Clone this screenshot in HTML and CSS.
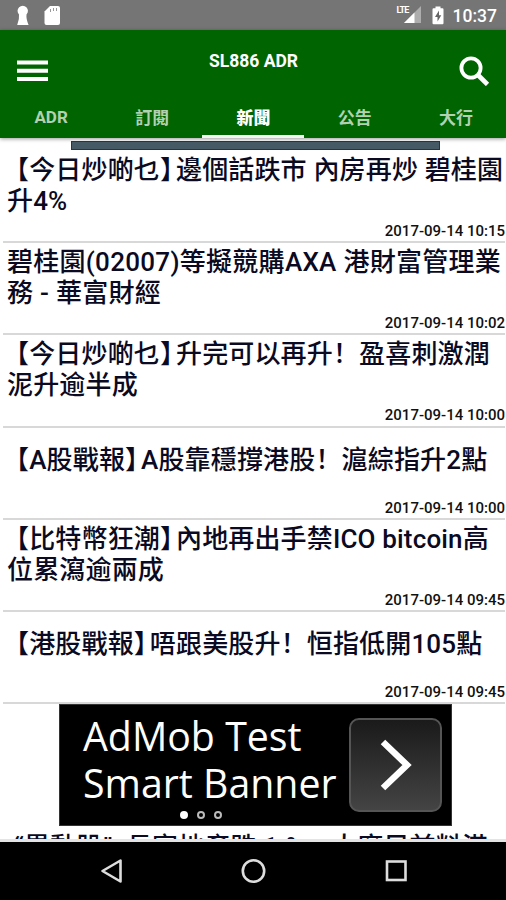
FILE: index.html
```html
<!DOCTYPE html>
<html lang="zh-CN">
<head>
    <meta charset="UTF-8">
    <meta name="viewport" content="width=device-width, initial-scale=1.0">
    <title>SL886 ADR</title>
    <link rel="stylesheet" href="styles.css">
</head>
<body>
    <div class="status-bar">
        <svg class="status-left" width="64" height="30" viewBox="0 0 64 30">
            <path fill="#fff" d="M17.2 25 Q19.600 19 19 14.500 A5.200 5.200 0 1 1 26.500 14.500 Q26 19 28.600 25 Z"/>
            <path fill="#fff" d="M50 6 H58 Q60 6 60 8 V23 Q60 25 58 25 H46.500 Q44.500 25 44.500 23 V11.500 Z"/>
            <path stroke="#999" stroke-width="1" d="M50.500 9 V12 M53.500 8 V11 M56.500 8 V11"/>
        </svg>
        <div class="status-right">
            <span class="lte">LTE</span>
            <svg class="signal" width="18" height="18" viewBox="0 0 18 18">
                <path fill="#adadad" d="M17 0 V17 H0 Z"/>
                <path fill="#fff" d="M10.500 6.500 V17 H0 Z"/>
            </svg>
            <svg width="12" height="19" viewBox="0 0 12 19">
                <path fill="#fff" d="M3.500 0.500 H8.500 V2.300 H10.500 Q11.500 2.300 11.500 3.500 V17 Q11.500 18.300 10.500 18.300 H1.500 Q0.500 18.300 0.500 17 V3.500 Q0.500 2.300 1.500 2.300 H3.500 Z"/>
                <path fill="#666" d="M7 4.500 L3 11 H5.500 V15.500 L9.300 9.300 H7 Z"/>
            </svg>
            <span class="clock">10:37</span>
        </div>
    </div>

    <header class="app-bar">
        <div class="toolbar">
            <svg width="31" height="22" viewBox="0 0 31 22">
                <path stroke="#fff" stroke-width="4" d="M0 2.500 H31 M0 10.700 H31 M0 18.900 H31"/>
            </svg>
            <h1 class="title">SL886 ADR</h1>
            <svg width="31" height="31" viewBox="0 0 31 31">
                <circle cx="12" cy="13" r="9.600" fill="none" stroke="#fff" stroke-width="3.800"/>
                <path stroke="#fff" stroke-width="4.600" d="M18.500 19.500 L28.500 29.500"/>
            </svg>
        </div>
        <nav class="tabs">
            <a class="tab">ADR</a>
            <a class="tab">訂閱</a>
            <a class="tab active">新聞</a>
            <a class="tab">公告</a>
            <a class="tab">大行</a>
        </nav>
    </header>

    <main class="content">
        <div class="top-banner"></div>
        <ul class="news">
            <li class="item">
                <p class="headline tagged"><span>【今日炒啲乜<span class="close">】</span>邊個話跌市 內房再炒 碧桂園<br><span class="second">升4%</span></span></p>
                <time>2017-09-14 10:15</time>
            </li>
            <li class="item">
                <p class="headline wide"><span>碧桂園(02007)等擬競購AXA 港財富管理業<br>務 - 華富財經</span></p>
                <time>2017-09-14 10:02</time>
            </li>
            <li class="item">
                <p class="headline tagged"><span>【今日炒啲乜<span class="close">】</span>升完可以再升！盈喜刺激潤<br><span class="second">泥升逾半成</span></span></p>
                <time>2017-09-14 10:00</time>
            </li>
            <li class="item single">
                <p class="headline tagged"><span>【A股戰報<span class="close">】</span>A股靠穩撐港股！滬綜指升2點</span></p>
                <time>2017-09-14 10:00</time>
            </li>
            <li class="item">
                <p class="headline tagged"><span>【比特幣狂潮<span class="close">】</span>內地再出手禁ICO bitcoin高<br><span class="second">位累瀉逾兩成</span></span></p>
                <time>2017-09-14 09:45</time>
            </li>
            <li class="item single">
                <p class="headline tagged"><span>【港股戰報<span class="close">】</span>唔跟美股升！恒指低開105點</span></p>
                <time>2017-09-14 09:45</time>
            </li>
        </ul>

        <div class="ad">
            <p class="ad-text">AdMob Test<br>Smart Banner</p>
            <div class="ad-button">
                <svg width="32" height="54" viewBox="0 0 32 54">
                    <path fill="none" stroke="#fff" stroke-width="6.500" d="M3 4 L27 27 L3 50"/>
                </svg>
            </div>
            <div class="dots"><i class="dot on"></i><i class="dot"></i><i class="dot"></i></div>
        </div>

        <p class="headline next"><span>“異動股”&nbsp; 長實地產跌 1.%，大摩目前料港</span></p>
    </main>

    <footer class="nav-bar">
        <svg width="506" height="58" viewBox="0 0 506 58">
            <g fill="none" stroke="#ddd" stroke-width="2.600">
                <path stroke-linejoin="round" d="M102.500 29 L120.500 18.500 V39.500 Z"/>
                <circle cx="253.500" cy="29" r="10.700"/>
                <rect x="387" y="19.500" width="18.500" height="18.500"/>
            </g>
        </svg>
    </footer>
</body>
</html>
```

FILE: styles.css
```css
* {
    box-sizing: border-box;
}
body {
    margin: 0;
    width: 506px;
    height: 900px;
    display: flex;
    flex-direction: column;
    overflow: hidden;
    background-color: #fff;
    font-family: Roboto, "Noto Sans CJK SC", sans-serif;
}
p, h1, ul {
    margin: 0;
    padding: 0;
}
.status-bar {
    height: 30px;
    display: flex;
    justify-content: space-between;
    background-color: #757575;
    color: #fff;
}
.status-right {
    display: flex;
    align-items: center;
    padding-right: 9px;
}
.lte {
    align-self: flex-start;
    margin-top: 5px;
    margin-right: -5px;
    font-size: 9px;
    line-height: 10px;
    font-weight: 700;
    letter-spacing: -0.8px;
}
.signal {
    margin-right: 10px;
}
.clock {
    margin-top: 2px;
    margin-left: 9px;
    font-size: 17.5px;
    font-weight: 500;
}
.app-bar {
    height: 108px;
    background-color: #006400;
    color: #fff;
    box-shadow: 0 1px 4px rgba(0, 0, 0, 0.4);
}
.toolbar {
    height: 66px;
    display: flex;
    justify-content: space-between;
    align-items: center;
    padding: 15px 16px 0 17px;
}
.title {
    margin-top: -20px;
    font-size: 17.5px;
    font-weight: 700;
}
.tabs {
    height: 42px;
    display: grid;
    grid-template-columns: repeat(5, 1fr);
}
.tab {
    display: flex;
    justify-content: center;
    align-items: center;
    padding: 2px 0 0 1px;
    border-bottom: 3px solid transparent;
    font-size: 17px;
    font-weight: 700;
    color: #b2d1b2;
}
.tab.active {
    color: #fff;
    font-weight: 900;
    border-bottom-color: #f2f6f2;
}
.content {
    height: 701px;
    overflow: hidden;
}
.top-banner {
    width: 369px;
    height: 9px;
    margin: 3px auto 0 71px;
    background-color: #455a64;
    border: 1px solid #173b4e;
}
.news {
    padding-top: 1px;
    list-style: none;
}
.item {
    height: 92.2px;
    margin: 0 1px 0 3px;
    display: flex;
    flex-direction: column;
    border-bottom: 2px solid #d8d8d8;
}
.headline {
    height: 70px;
    display: flex;
    align-items: center;
    padding-left: 4px;
    font-size: 26px;
    line-height: 31px;
    letter-spacing: 0.16px;
    font-weight: 500;
    color: #0a0a22;
    white-space: nowrap;
}
.headline.wide {
    letter-spacing: 0.28px;
}
.single .headline {
    height: 66px;
}
.single time {
    margin-top: 5px;
}
/* the opening bracket hangs a little to the left */
.tagged {
    padding-left: 0;
}
.second {
    padding-left: 4px;
}
.close {
    letter-spacing: -10px;
}
time {
    align-self: flex-end;
    margin-top: 1px;
    font-size: 15px;
    line-height: 18px;
    font-weight: 500;
    color: #111;
    white-space: nowrap;
}
.ad {
    position: relative;
    width: 393px;
    height: 122px;
    margin-left: 59px;
    display: flex;
    justify-content: space-between;
    padding: 13px 9px 0 23px;
    background-color: #000;
    border: 1px solid #333;
}
.ad-text {
    margin-top: -5px;
    font-family: "Open Sans", "Noto Sans", sans-serif;
    font-size: 39.3px;
    line-height: 47px;
    color: #fff;
    white-space: nowrap;
}
.ad-button {
    width: 93px;
    height: 94px;
    display: flex;
    justify-content: center;
    align-items: center;
    border: 2px solid #555;
    border-radius: 10px;
    background: linear-gradient(#1a1a1a, #444);
}
.dots {
    position: absolute;
    left: 120px;
    bottom: 6px;
    display: flex;
    gap: 9px;
}
.dot {
    width: 8px;
    height: 8px;
    border: 2px solid #bbb;
    border-radius: 50%;
}
.dot.on {
    background-color: #fff;
    border-color: #fff;
}
.next {
    height: 31px;
    margin-top: 6px;
    padding-left: 14px;
}
.nav-bar {
    height: 61px;
    background-color: #000;
    border-top: 3px solid #e4e4e4;
}
.nav-bar svg {
    display: block;
}
```
